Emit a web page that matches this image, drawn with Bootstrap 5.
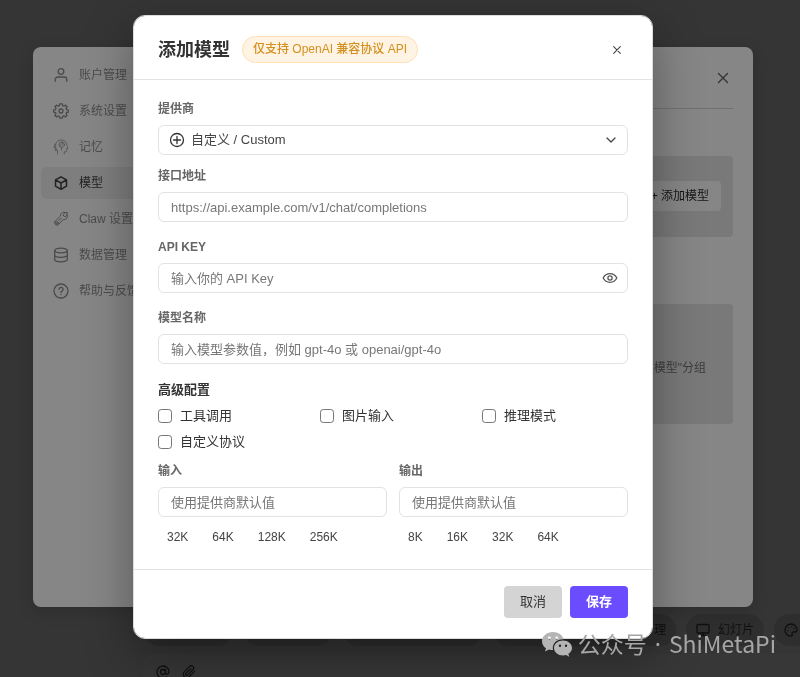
<!DOCTYPE html>
<html lang="zh-CN">
<head>
<meta charset="utf-8">
<meta name="viewport" content="width=device-width, initial-scale=1">
<title>添加模型</title>
<link href="https://cdn.jsdelivr.net/npm/bootstrap@5.3.0/dist/css/bootstrap.min.css" rel="stylesheet">
<style>
body{background:#353535;font-family:"Liberation Sans","Noto Sans CJK SC",sans-serif;font-size:12px;line-height:18px;color:#333}
svg{display:block;flex:none;fill:none;stroke:currentColor;stroke-linecap:round;stroke-linejoin:round}
svg:not([stroke-width]){stroke-width:1.3}
button,input,select{font-family:inherit}
/* page behind the dialogs */
.page{height:100vh;padding-left:143px;color:#101010}
.pill{height:32px;border-radius:16px;background:#2e2e2e;flex:none;border:0;color:inherit;padding:0 10px}
.pill-s{width:90px}.pill-m{width:140px}.pill-l{width:183px}
.pills{gap:10px}
.composer{height:23px;background:#373737;border-radius:12px 0 0 0;padding:11px 13px 0;gap:8px}
/* layers */
.layer{padding:0 14px 23px 0}
.settings{width:720px;height:560px;border-radius:8px;background:#868686;color:#4b4b4b;box-shadow:0 4px 16px rgba(0,0,0,.15)}
.side{width:180px;padding:12px 8px;gap:4px}
.side-item{height:32px;padding:0 12px;gap:10px;border-radius:6px;color:#4b4b4b;text-decoration:none;white-space:nowrap}
.side-item.current{background:#7e7e7e;color:#222}
.content{padding:0 20px}
.content-top{height:62px;border-bottom:1px solid #717171}
.content-top button{color:#333;padding:2px}
.tile{background:#797979;border-radius:4px}
.tile-a{height:81px;margin-top:47px;padding:0 12px 2px 0}
.tile-b{height:120px;margin-top:67px;padding:8px 27px 0 0;color:#3c3c3c}
.tile-btn{height:30px;border-radius:4px;background:#868686;border:0;color:#151515;padding:0 12px}
.dialog{width:520px;border:1px solid #dcdcdc;border-radius:12px;box-shadow:0 16px 48px rgba(0,0,0,.36);color:#333}
.dialog .modal-header{height:64px;padding:4px 24px 0;border-bottom:1px solid #e2e2e2}
.dialog .modal-title{font-size:18px;line-height:26px;font-weight:700}
.tag{font-size:12px;font-weight:500;line-height:25px;color:#d4901f;background:#fff3e4;border:1px solid #ffdfb3;border-radius:14px;padding:0 10px}
.close-btn{width:22px;height:24px;color:#444}
.dialog .modal-body{padding:20px 24px}
.field-label{display:block;font-weight:700;line-height:19px;color:#666;margin-bottom:6px}
.field{height:30px;padding:0 12px;font-size:13px;line-height:18px;border:1px solid #e2e2e2;border-radius:6px;color:#444;background:#fff}
.field::placeholder{color:#777}
.provider{padding:0 32px;background-image:none;line-height:26px}
.lead-icon{position:absolute;left:11px;top:7px;pointer-events:none}
.end-icon{position:absolute;right:11px;top:9px;color:#444;pointer-events:none}
.eye-btn{position:absolute;right:10px;top:7px;color:#555}
.gap-12{margin-bottom:12px}
.sub-title{font-size:13px;line-height:20px;font-weight:700;margin:0 0 6px}
.checks{--bs-gutter-y:6px;margin-top:0;margin-bottom:10px}
.tick{height:20px;gap:8px;font-size:13px;line-height:18px}
.tick input{width:14px;height:14px;margin:0;border:1px solid #767676;border-radius:3px}
.limits{--bs-gutter-x:12px}
.presets{gap:6px;margin-top:8px}
.preset{height:24px;padding:0 8px;font-size:12px;line-height:22px;border:1px solid transparent;background:none;color:#444}
.dialog .modal-footer{padding:16px 24px 20px;gap:8px;border-top:1px solid #e2e2e2}
.act{width:58px;height:32px;padding:0;font-size:13px;line-height:30px;border:0;border-radius:4px}
.act-cancel{background:#d4d4d4;color:#333}
.act-save{background:#6b4dff;color:#fff;font-weight:700}
.watermark{position:fixed;right:24px;bottom:17px;z-index:2000;gap:6px;color:#a6a6a6;font:23px/32px "Noto Sans CJK SC",sans-serif;pointer-events:none}
.watermark svg{fill:#b4b4b4;stroke:none}
.dot{font-family:"Noto Sans",sans-serif}
</style>
</head>
<body>
<main class="page d-flex flex-column justify-content-end gap-2 overflow-hidden">
  <div class="pills d-flex">
    <span class="pill pill-s"></span><span class="pill pill-s"></span><span class="pill pill-m"></span>
    <button class="pill pill-l text-end" type="button">理</button>
    <button class="pill d-flex align-items-center gap-2" type="button"><svg width="14" height="14" viewBox="0 0 14 14"><rect x="1" y="1.5" width="12" height="8.5" rx="1"/><path d="M7 10v2.5M4.5 12.500h5"/></svg>幻灯片</button>
    <button class="pill pill-s d-flex align-items-center" type="button" aria-label="设计"><svg width="14" height="14" viewBox="0 0 14 14"><path d="M7 1a6 6 0 0 0 0 12c1.400 0 1.700-1 1.100-1.800-.7-1 .1-2.200 1.300-2.200H11c1.300 0 2-.9 2-2C13 3.500 10.300 1 7 1z"/><path d="M4 7.600h.01M4.700 4.600h.01M7.600 3.800h.01M10.200 5.500h.01"/></svg></button>
  </div>
  <div class="composer d-flex">
    <svg width="14" height="14" viewBox="0 0 14 14"><circle cx="7" cy="7" r="2.500"/><path d="M9.500 4.500v3.300c0 2.100 3.500 1.800 3.500-.8a6 6 0 1 0-2.500 4.900"/></svg>
    <svg class="ms-1" width="14" height="14" viewBox="0 0 24 24" stroke-width="2"><path d="m21.400 11-9.100 9.200a6 6 0 0 1-8.500-8.500l9.200-9.200a4 4 0 0 1 5.700 5.700l-9.200 9.200a2 2 0 0 1-2.900-2.900l8.500-8.400"/></svg>
  </div>
</main>

<div class="layer position-fixed top-0 bottom-0 start-0 end-0 d-flex align-items-center justify-content-center">
  <section class="settings d-flex">
    <nav class="side d-flex flex-column" aria-label="设置">
      <a href="#" class="side-item d-flex align-items-center"><svg width="16" height="16" viewBox="0 0 16 16"><circle cx="8" cy="4.500" r="2.800"/><path d="M2.200 14.300v-1.500A2.800 2.800 0 0 1 5 10h6a2.800 2.800 0 0 1 2.800 2.800v1.500"/></svg>账户管理</a>
      <a href="#" class="side-item d-flex align-items-center"><svg width="16" height="16" viewBox="0 0 16 16"><circle cx="8" cy="8" r="2"/><path d="M6.700.8h2.600l.4 1.900 1.200.5 1.700-1.100 1.500 1.700-1.100 1.600.5 1.200 1.900.4v2.100l-1.900.4-.5 1.200 1.100 1.700-1.700 1.600-1.600-1.100-1.200.5-.3 1.800H6.800l-.4-1.800-1.300-.5-1.600 1.100L1.900 12.400 3 10.700l-.5-1.200-1.900-.4V7l1.900-.4L3 5.400 1.900 3.700l1.600-1.600 1.600 1.100 1.300-.5z"/></svg>系统设置</a>
      <a href="#" class="side-item d-flex align-items-center"><svg width="16" height="16" viewBox="0 0 16 16" stroke-width=".7"><path d="M4.500 15v-3.600C1.300 8.700 1.600 1 8.500 1c3.300 0 5.500 2.200 5.500 5.500l1 3h-1.300v2.300c0 .9-.7 1.200-2.500 1V15M2 5 1 8.500h1.300v3h1.200"/><circle cx="8.800" cy="5.600" r="2.800"/><path d="M8.300 4h1.500v1.500L8.600 6.800M7 5.500v1.200M8.500 8.500V11"/></svg>记忆</a>
      <a href="#" class="side-item current d-flex align-items-center" aria-current="page"><svg width="16" height="16" viewBox="0 0 16 16" stroke-width="1.500"><path d="m8 1.800 5.500 3v6.400L8 14.300l-5.500-3.100V4.800zM2.500 4.800 8 8l5.500-3.200M8 8v6.300"/></svg>模型</a>
      <a href="#" class="side-item d-flex align-items-center"><svg width="16" height="16" viewBox="0 0 16 16" stroke-width="1"><path d="M2 10.500 7.500 5c-.2-2.500 2.300-4.500 4.500-3.400L10 4l1.800 2L14 3.800c1.200 3.600-1.700 5.200-3.700 4.700L5.400 13.700c-2 1.800-5-1.200-3.400-3.200z"/><circle cx="4" cy="12" r="1.200"/><path d="m5.500 10 3-3M12 1.600l2.300-.1-.3 2.300"/></svg>Claw 设置</a>
      <a href="#" class="side-item d-flex align-items-center"><svg width="16" height="16" viewBox="0 0 16 16"><ellipse cx="8" cy="3.500" rx="6.300" ry="2.300"/><path d="M1.700 3.500v9c0 1.300 2.800 2.300 6.300 2.300s6.300-1 6.300-2.300v-9M1.700 8c0 1.300 2.800 2.300 6.300 2.300s6.300-1 6.300-2.300"/></svg>数据管理</a>
      <a href="#" class="side-item d-flex align-items-center"><svg width="16" height="16" viewBox="0 0 16 16"><circle cx="8" cy="8" r="7"/><path d="M6.100 6.300a2 2 0 1 1 2.900 1.800c-.7.4-1 .7-1 1.300M8 11.500h.01"/></svg>帮助与反馈</a>
    </nav>
    <div class="content flex-grow-1">
      <div class="content-top d-flex justify-content-end align-items-center"><button type="button" class="btn border-0" aria-label="关闭设置"><svg width="16" height="16" viewBox="0 0 16 16"><path d="m3.500 3.500 9 9m0-9-9 9"/></svg></button></div>
      <div class="tile tile-a d-flex align-items-center justify-content-end"><button type="button" class="tile-btn">+ 添加模型</button></div>
      <div class="tile tile-b d-flex align-items-center justify-content-end"><span>模型"分组</span></div>
    </div>
  </section>
</div>

<div class="modal layer d-flex align-items-center justify-content-center" role="dialog" aria-labelledby="dlg-title">
  <form class="modal-content dialog">
    <div class="modal-header">
      <div class="d-flex align-items-center"><h1 class="modal-title me-2 pe-1" id="dlg-title">添加模型</h1><span class="tag">仅支持 OpenAI 兼容协议 API</span></div>
      <button type="button" class="btn close-btn border-0 p-0 d-flex align-items-center justify-content-center" aria-label="关闭"><svg width="10" height="10" viewBox="0 0 10 10" stroke-width="1.100"><path d="m1.700 1.700 6.600 6.600m0-6.600L1.700 8.300"/></svg></button>
    </div>
    <div class="modal-body">
      <div class="gap-12">
        <label class="field-label" for="provider">提供商</label>
        <div class="position-relative">
          <select class="form-select field provider" id="provider"><option>自定义 / Custom</option></select>
          <svg class="lead-icon" width="16" height="16" viewBox="0 0 16 16"><circle cx="8" cy="8" r="6.500"/><path d="M8 4.500v7M4.500 8h7"/></svg>
          <svg class="end-icon" width="12" height="12" viewBox="0 0 12 12"><path d="m2 4 4 4 4-4"/></svg>
        </div>
      </div>
      <div class="mb-3">
        <label class="field-label" for="endpoint">接口地址</label>
        <input class="form-control field" id="endpoint" type="text" placeholder="https://api.example.com/v1/chat/completions">
      </div>
      <div class="mb-3">
        <label class="field-label" for="key">API KEY</label>
        <div class="position-relative">
          <input class="form-control field" id="key" type="password" placeholder="输入你的 API Key">
          <button type="button" class="btn eye-btn border-0 p-0" aria-label="显示密钥"><svg width="16" height="16" viewBox="0 0 16 16"><path d="M1.200 8C2.600 5.200 5 3.700 8 3.700s5.400 1.500 6.800 4.300c-1.400 2.800-3.800 4.300-6.800 4.300S2.600 10.800 1.200 8z"/><circle cx="8" cy="8" r="2.100"/></svg></button>
        </div>
      </div>
      <div class="mb-3">
        <label class="field-label" for="model">模型名称</label>
        <input class="form-control field" id="model" type="text" placeholder="输入模型参数值，例如 gpt-4o 或 openai/gpt-4o">
      </div>
      <h2 class="sub-title">高级配置</h2>
      <div class="checks row row-cols-3 gx-3">
        <div class="col mt-0"><label class="tick d-flex align-items-center"><input class="form-check-input" type="checkbox">工具调用</label></div>
        <div class="col mt-0"><label class="tick d-flex align-items-center"><input class="form-check-input" type="checkbox">图片输入</label></div>
        <div class="col mt-0"><label class="tick d-flex align-items-center"><input class="form-check-input" type="checkbox">推理模式</label></div>
        <div class="col"><label class="tick d-flex align-items-center"><input class="form-check-input" type="checkbox">自定义协议</label></div>
      </div>
      <div class="limits row row-cols-2">
        <div class="col">
          <label class="field-label" for="in-limit">输入</label>
          <input class="form-control field" id="in-limit" type="text" placeholder="使用提供商默认值">
          <div class="presets d-flex"><button type="button" class="preset">32K</button><button type="button" class="preset">64K</button><button type="button" class="preset">128K</button><button type="button" class="preset">256K</button></div>
        </div>
        <div class="col">
          <label class="field-label" for="out-limit">输出</label>
          <input class="form-control field" id="out-limit" type="text" placeholder="使用提供商默认值">
          <div class="presets d-flex"><button type="button" class="preset">8K</button><button type="button" class="preset">16K</button><button type="button" class="preset">32K</button><button type="button" class="preset">64K</button></div>
        </div>
      </div>
    </div>
    <div class="modal-footer">
      <button type="button" class="btn act act-cancel m-0">取消</button>
      <button type="submit" class="btn act act-save m-0">保存</button>
    </div>
  </form>
</div>

<div class="watermark d-flex align-items-center">
  <svg width="30" height="26" viewBox="0 0 30 26"><path fill-rule="evenodd" d="M11 1C5 1 0 5 0 10.200c0 3 1.600 5.400 4 7L3 20.500l4-2c1.200.4 2.600.5 4 .5-1.300-6 3.500-10.800 10.600-10.700C20.500 3.900 16.200 1 11 1zM7.400 5.500a1.400 1.400 0 1 1 0 2.900 1.400 1.400 0 0 1 0-2.900zm7.400 0a1.400 1.400 0 1 1 0 2.900 1.400 1.400 0 0 1 0-2.900z"/><path fill-rule="evenodd" d="M21 9.500c-5 0-9 3.300-9 7.500s4 7.500 9 7.500c1.100 0 2.100-.2 3.100-.5l3.100 1.700-.8-2.900C28.600 21.500 30 19.400 30 17c0-4.200-4-7.500-9-7.500zm-3 4a1.200 1.200 0 1 1 0 2.400 1.200 1.200 0 0 1 0-2.400zm6 0a1.200 1.200 0 1 1 0 2.400 1.200 1.200 0 0 1 0-2.400z"/></svg>
  <span>公众号<span class="dot mx-2">·</span>ShiMetaPi</span>
</div>
<script src="https://cdn.jsdelivr.net/npm/bootstrap@5.3.0/dist/js/bootstrap.bundle.min.js"></script>
</body>
</html>
